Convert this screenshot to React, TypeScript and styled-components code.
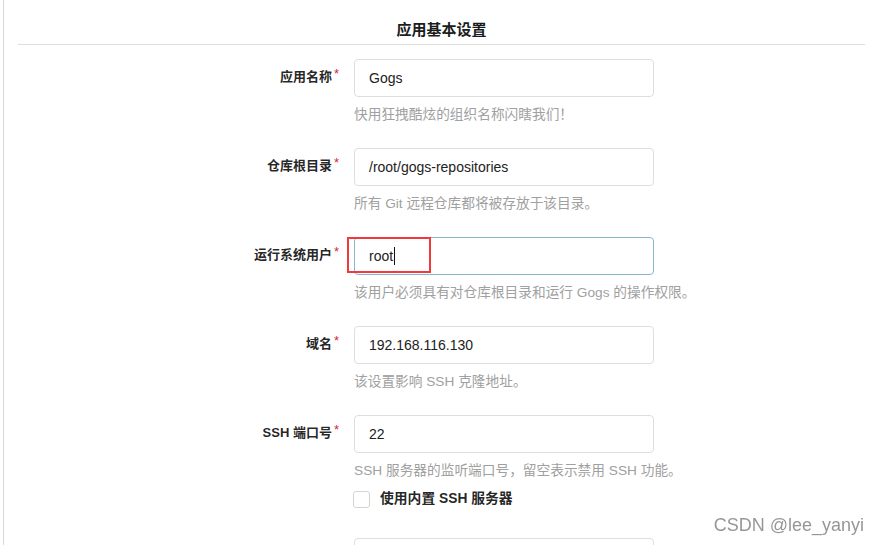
import { createGlobalStyle, styled } from "styled-components";

const GlobalStyle = createGlobalStyle`
  html, body {
    margin: 0;
    padding: 0;
    overflow: hidden;
    background: #fff;
    font-family: "Liberation Sans", "Noto Sans CJK SC", sans-serif;
    color: rgba(0, 0, 0, 0.87);
  }
`;

const Page = styled.div`
  margin-left: 3px;
  border-left: 1px solid #d6d6d6;
  height: 100vh;
  padding: 0 14px;
  box-sizing: border-box;
`;

const SectionTitle = styled.h4`
  margin: 0 0 14px;
  padding: 20px 0 4px;
  border-bottom: 1px solid #dedede;
  text-align: center;
  font-size: 15px;
  line-height: 20px;
  font-weight: 700;
  color: #1b1c1d;
`;

const Field = styled.div`
  display: flex;
  align-items: flex-start;
  margin-bottom: 23px;
`;

const Label = styled.label`
  flex: 0 0 321px;
  text-align: right;
  font-size: 13px;
  font-weight: 700;
  line-height: 36px;
  color: rgba(0, 0, 0, 0.87);
`;

const Required = styled.span`
  position: relative;
  top: -3px;
  margin-left: 2px;
  color: #db2828;
  font-size: 13px;
  font-weight: 400;
`;

const Control = styled.div`
  width: 300px;
  margin-left: 15px;
`;

const InputBox = styled.div<{ $focused?: boolean }>`
  position: relative;
  display: flex;
  align-items: center;
  height: 38px;
  box-sizing: border-box;
  padding: 0 14px;
  border: 1px solid ${({ $focused }) => ($focused ? "#85b7d9" : "#dedede")};
  border-radius: 4px;
  font-size: 14px;
  color: #222;
  background: #fff;
`;

const Caret = styled.span`
  display: inline-block;
  width: 1px;
  height: 18px;
  margin-left: 1px;
  background: #111;
`;

const Highlight = styled.span`
  position: absolute;
  left: -8px;
  top: -1px;
  width: 84px;
  height: 36px;
  box-sizing: border-box;
  border: 2px solid #f23a3c;
`;

const Help = styled.div`
  margin-top: 8px;
  font-size: 13.7px;
  line-height: 20px;
  color: #a0a0a0;
  white-space: nowrap;
`;

const CheckRow = styled.label`
  display: flex;
  align-items: center;
  gap: 10px;
  margin-top: 8px;
  margin-bottom: 6px;
  font-size: 13.8px;
  font-weight: 700;
  line-height: 20px;
  color: rgba(0, 0, 0, 0.87);
  white-space: nowrap;
`;

const Box = styled.span`
  width: 17px;
  height: 17px;
  margin-left: -1px;
  box-sizing: border-box;
  border: 1px solid #d4d4d5;
  border-radius: 3px;
  background: #fff;
`;

const Watermark = styled.div`
  position: fixed;
  right: 15px;
  bottom: 10px;
  font-size: 18px;
  line-height: 20px;
  color: rgba(80, 80, 80, 0.6);
  pointer-events: none;
`;

type FieldDef = {
  label: string;
  value: string;
  help?: string;
  focused?: boolean;
  checkbox?: string;
};

const fields: FieldDef[] = [
  { label: "应用名称", value: "Gogs", help: "快用狂拽酷炫的组织名称闪瞎我们！" },
  {
    label: "仓库根目录",
    value: "/root/gogs-repositories",
    help: "所有 Git 远程仓库都将被存放于该目录。",
  },
  {
    label: "运行系统用户",
    value: "root",
    help: "该用户必须具有对仓库根目录和运行 Gogs 的操作权限。",
    focused: true,
  },
  { label: "域名", value: "192.168.116.130", help: "该设置影响 SSH 克隆地址。" },
  {
    label: "SSH 端口号",
    value: "22",
    help: "SSH 服务器的监听端口号，留空表示禁用 SSH 功能。",
    checkbox: "使用内置 SSH 服务器",
  },
];

export default function App() {
  return (
    <>
      <GlobalStyle />
      <Page>
        <SectionTitle>应用基本设置</SectionTitle>
        {fields.map((f) => (
          <Field key={f.label}>
            <Label>
              {f.label}
              <Required>*</Required>
            </Label>
            <Control>
              <InputBox $focused={f.focused}>
                {f.value}
                {f.focused && <Caret />}
                {f.focused && <Highlight />}
              </InputBox>
              {f.help && <Help>{f.help}</Help>}
              {f.checkbox && (
                <CheckRow>
                  <Box />
                  {f.checkbox}
                </CheckRow>
              )}
            </Control>
          </Field>
        ))}
        <Field>
          <Label />
          <Control>
            <InputBox />
          </Control>
        </Field>
      </Page>
      <Watermark>CSDN @lee_yanyi</Watermark>
    </>
  );
}
